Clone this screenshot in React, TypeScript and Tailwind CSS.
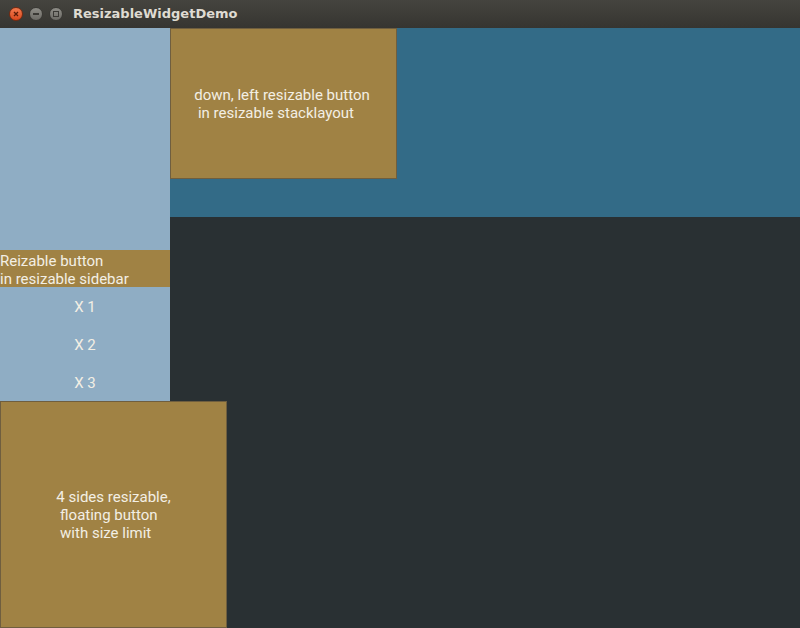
import React from 'react';

const brown = 'bg-[#a08244]';

export default function App() {
  return (
    <div className="w-[800px] h-[628px] flex flex-col overflow-hidden font-['Roboto',sans-serif] text-[15px] text-[#f3efe4]">
      {/* Title bar */}
      <div className="h-[28px] flex items-center bg-gradient-to-b from-[#45443f] to-[#363531] shrink-0">
        <div className="flex items-center gap-[6px] pl-[9px]">
          <div className="w-[14px] h-[14px] rounded-full bg-gradient-to-b from-[#f27a4e] to-[#d9481b] border border-[#7a2a10] flex items-center justify-center">
            <svg width="6" height="6" viewBox="0 0 6 6">
              <path d="M1 1L5 5M5 1L1 5" stroke="#5a1c08" strokeWidth="1.3" />
            </svg>
          </div>
          <div className="w-[14px] h-[14px] rounded-full bg-gradient-to-b from-[#8e8d87] to-[#6c6b66] border border-[#3a3935] flex items-center justify-center">
            <div className="w-[6px] h-[1.5px] bg-[#3a3935]" />
          </div>
          <div className="w-[14px] h-[14px] rounded-full bg-gradient-to-b from-[#8e8d87] to-[#6c6b66] border border-[#3a3935] flex items-center justify-center">
            <div className="w-[6px] h-[6px] border border-[#3a3935]" />
          </div>
        </div>
        <div className="ml-[10px] font-['DejaVu_Sans',sans-serif] font-bold text-[13px] text-[#dfdbd2]">
          ResizableWidgetDemo
        </div>
      </div>

      {/* Body */}
      <div className="flex-1 flex relative">
        {/* Sidebar */}
        <div className="w-[170px] bg-[#8fadc4] flex flex-col shrink-0">
          <div className="h-[222px]" />
          <div className={`h-[37px] ${brown} leading-[18px] pt-[2px] flex flex-col justify-center`}>
            <span>Reizable button</span>
            <span>in resizable sidebar</span>
          </div>
          {['X 1', 'X 2', 'X 3'].map((label) => (
            <div key={label} className="h-[38px] pt-[2px] flex items-center justify-center">
              {label}
            </div>
          ))}
        </div>

        {/* Main */}
        <div className="flex-1 flex flex-col">
          <div className="h-[189px] bg-[#336b87]">
            <div className={`w-[227px] h-[151px] ${brown} border border-[#6f5e3f] flex items-center justify-center`}>
              <div className="whitespace-pre text-left leading-[18px] -ml-[3px]">
                {'down, left resizable button\n in resizable stacklayout'}
              </div>
            </div>
          </div>
          <div className="flex-1 bg-[#293033]" />
        </div>

        {/* Floating button */}
        <div className={`absolute left-0 top-[373px] w-[227px] h-[227px] ${brown} border border-[#6f5e3f] flex items-center justify-center`}>
          <div className="whitespace-pre text-left leading-[18px]">
            {'4 sides resizable,\n floating button\n with size limit'}
          </div>
        </div>
      </div>
    </div>
  );
}
